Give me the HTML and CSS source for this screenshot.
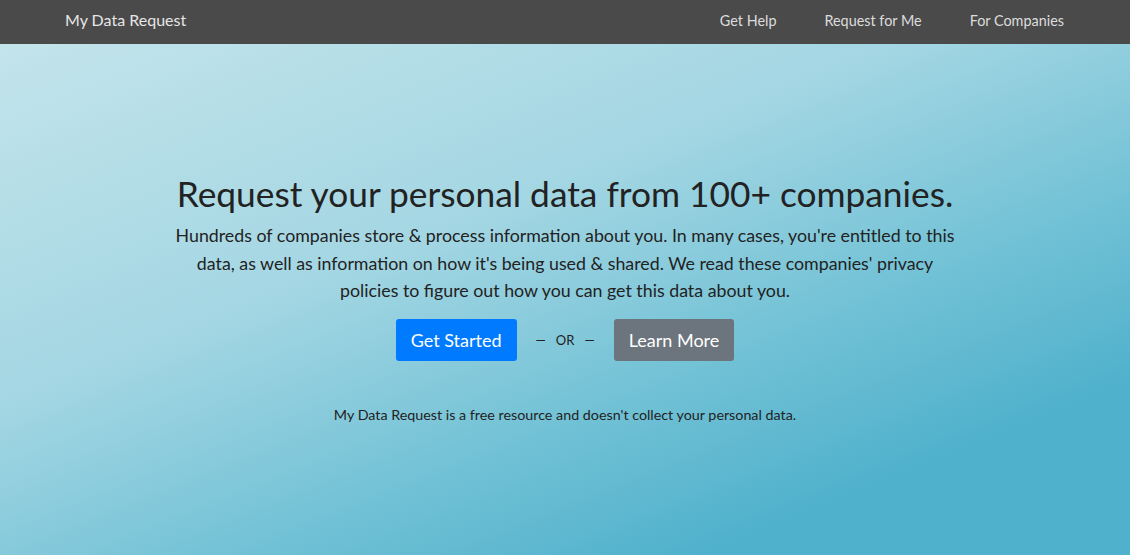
FILE: index.html
```html
<!DOCTYPE html>
<html lang="en">
<head>
<meta charset="utf-8">
<title>My Data Request</title>
<link rel="stylesheet" href="styles.css">
</head>
<body>
<nav class="navbar">
  <a class="brand" href="#">My Data Request</a>
  <ul class="nav-links">
    <li><a href="#">Get Help</a></li>
    <li><a href="#">Request for Me</a></li>
    <li><a href="#">For Companies</a></li>
  </ul>
</nav>
<main class="hero">
  <div class="hero-inner">
    <h1 class="title">Request your personal data from 100+ companies.</h1>
    <p class="lead">Hundreds of companies store &amp; process information about you. In many cases, you're entitled to this data, as well as information on how it's being used &amp; shared. We read these companies' privacy policies to figure out how you can get this data about you.</p>
    <div class="actions">
      <a class="btn btn-primary" href="#">Get Started</a>
      <span class="or">&mdash;&nbsp;&nbsp; OR &nbsp;&nbsp;&mdash;</span>
      <a class="btn btn-secondary" href="#">Learn More</a>
    </div>
    <p class="note">My Data Request is a free resource and doesn't collect your personal data.</p>
  </div>
</main>
</body>
</html>
```
FILE: styles.css
```css
* { box-sizing: border-box; }
html, body { margin: 0; padding: 0; height: 100%; }
body {
  font-family: Lato, "Open Sans", "Liberation Sans", sans-serif;
  color: #222;
  display: flex;
  flex-direction: column;
  background: #50b1cc;
}
a { text-decoration: none; }
.navbar {
  height: 44px;
  background: #4a4a4a;
  display: flex;
  align-items: center;
  justify-content: space-between;
  padding: 0 66px 6px 65px;
}
.brand {
  color: #e6e6e6;
  font-size: 16px;
}
.nav-links {
  list-style: none;
  margin: 0;
  padding: 0;
  display: flex;
  gap: 48px;
}
.nav-links a {
  color: #dcdcdc;
  font-size: 14.4px;
}
.hero {
  flex: 1;
  background: linear-gradient(158deg, #c3e4eb 0%, #a3d6e3 38%, #73c2d6 62%, #50b1cc 82%, #50b1cc 100%);
  display: flex;
  justify-content: center;
}
.hero-inner {
  width: 790px;
  text-align: center;
  padding-top: 128px;
}
.title {
  margin: 0;
  font-weight: 400;
  font-size: 35.3px;
  line-height: 44px;
  color: #222;
}
.lead {
  margin: 6px auto 0;
  width: 780px;
  font-size: 17.8px;
  line-height: 27.5px;
  color: #222;
}
.actions {
  margin-top: 14px;
  display: flex;
  justify-content: center;
  align-items: center;
  gap: 19px;
}
.btn {
  display: inline-block;
  height: 42px;
  line-height: 42px;
  padding: 0 15px;
  border-radius: 3px;
  color: #fff;
  font-size: 18px;
}
.btn-primary { background: #007bff; }
.btn-secondary { background: #6c757d; }
.or {
  font-size: 13px;
  color: #222;
}
.note {
  margin: 45px 0 0;
  font-size: 14.3px;
  color: #222;
}
```
